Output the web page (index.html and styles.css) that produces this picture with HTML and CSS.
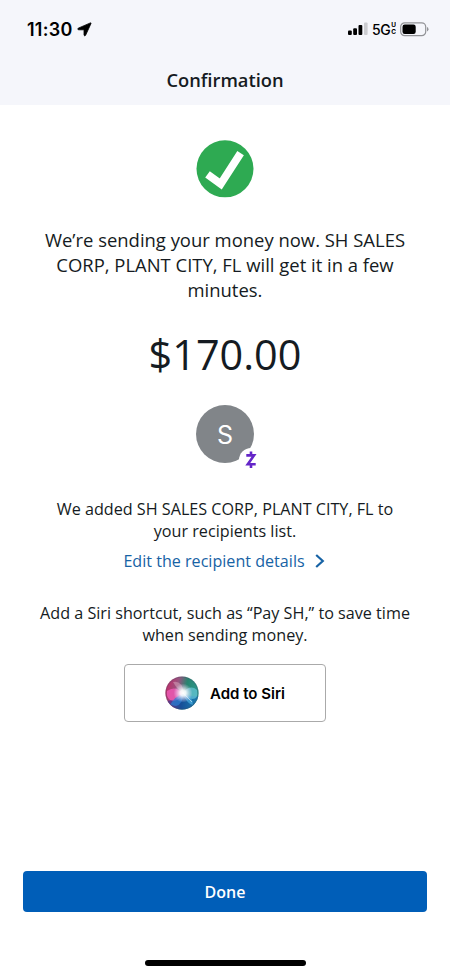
FILE: index.html
```html
<!DOCTYPE html>
<html lang="en">
<head>
<meta charset="utf-8">
<meta name="viewport" content="width=device-width, initial-scale=1">
<title>Confirmation</title>
<link rel="stylesheet" href="styles.css">
</head>
<body>
<div class="screen">
  <header class="header">
    <div class="status">
      <div class="clock">
        <span class="time">11:30</span>
        <svg class="location" width="15" height="15" viewBox="0 0 15 15"><path d="M13.4.9 1.2 6.2Q.2 7 1.3 7.8H6.6Q7 7.8 7 8.2V13.2Q7.7 14.5 8.6 13.3L14 1.5Q14.2.6 13.4.9Z" stroke="#000" stroke-width=".8" stroke-linejoin="round"/></svg>
      </div>
      <div class="indicators">
        <svg width="20" height="14" viewBox="0 0 20 14"><rect x="0" y="8.5" width="3.8" height="4.5" rx="1"/><rect x="5.2" y="6.3" width="3.8" height="6.7" rx="1"/><rect x="10.5" y="3" width="3.8" height="10" rx="1"/><rect x="16" y="0.5" width="3.6" height="12.5" rx="1" fill="#cbccd0"/></svg>
        <span class="network">5G</span>
        <span class="band"><span>U</span><span>C</span></span>
        <svg class="battery" width="29" height="15" viewBox="0 0 29 15"><rect x=".7" y=".8" width="25" height="12.9" rx="4" fill="none" stroke="#929397" stroke-width="1.2"/><rect x="2.5" y="2.6" width="13.2" height="9.3" rx="2.2"/><path d="M27 5Q28.5 5.6 28.5 7.2T27 9.5Z" fill="#929397"/></svg>
      </div>
    </div>
    <h1 class="title">Confirmation</h1>
  </header>
  <main class="content">
    <svg class="success" width="58" height="58" viewBox="0 0 58 58"><circle cx="29" cy="28.8" r="28.5" fill="#2eaa52"/><path d="m11.5 34.4 13.2 9.6L44.6 13.1" fill="none" stroke="#fff" stroke-width="7.8" stroke-linejoin="miter"/></svg>
    <p class="message">We’re sending your money now. SH SALES<br>CORP, PLANT CITY, FL will get it in a few<br>minutes.</p>
    <p class="amount">$170.00</p>
    <div class="avatar">S
      <span class="badge"><svg width="12" height="18" viewBox="0 0 12 18" fill="none" stroke="#6425c8" stroke-width="2.6"><path d="M1.3 4.4H9L2.8 13.2H10.7M6 .6V4M6 13.2V17"/></svg></span>
    </div>
    <p class="note added">We added SH SALES CORP, PLANT CITY, FL to<br>your recipients list.</p>
    <a class="edit" href="#"><span>Edit the recipient details</span><svg width="10" height="14" viewBox="0 0 10 14" fill="none" stroke="#1763a5" stroke-width="2.2"><path d="m1.2 1 6.6 6-6.6 6"/></svg></a>
    <p class="note shortcut">Add a Siri shortcut, such as “Pay SH,” to save time<br>when sending money.</p>
    <button class="siri">
      <svg width="34" height="34" viewBox="0 0 34 34">
        <defs>
          <linearGradient id="base" x1="0" y1=".35" x2="1" y2=".55"><stop offset="0" stop-color="#c52c69"/><stop offset=".35" stop-color="#96547f"/><stop offset=".6" stop-color="#28846f"/><stop offset="1" stop-color="#2a9c91"/></linearGradient>
          <linearGradient id="low" x1="0" y1="0" x2="1" y2="0"><stop offset="0" stop-color="#78308f"/><stop offset=".45" stop-color="#174f98"/><stop offset="1" stop-color="#1a83b2"/></linearGradient>
          <radialGradient id="glow"><stop offset="0" stop-color="#fff"/><stop offset=".3" stop-color="#fff" stop-opacity=".9"/><stop offset="1" stop-color="#e9d9ff" stop-opacity="0"/></radialGradient>
          <clipPath id="orb"><circle cx="17" cy="17" r="16.6"/></clipPath>
        </defs>
        <g clip-path="url(#orb)">
          <path d="M0 0H34V34H0Z" fill="url(#base)"/>
          <path d="M1 25Q9 25 18 17Q24 21 34 20V34H1Z" fill="url(#low)"/>
          <path d="M2 15Q10 9 18 17Q13 27 5 24Q1 21 2 15Z" fill="#ec58b3" opacity=".85"/>
          <path d="M18 17Q25 8 32 14Q34 23 27 23Q22 22 18 17Z" fill="#68c7da" opacity=".7"/>
          <path d="M5 29Q10 20 18 18Q18 28 11 30Z" fill="#287fd3" opacity=".7"/>
          <path d="M18 18Q28 20 28 29Q22 28 18 18Z" fill="#51b9e9" opacity=".6"/>
          <path d="M8 6Q17 4 19 17Q13 15 8 6Z" fill="#dbabc0" opacity=".5"/>
          <circle cx="18" cy="17" r="9.5" fill="url(#glow)"/>
          <path d="m18 17 9 9" fill="none" stroke="#fff" stroke-width=".8" opacity=".65"/>
        </g>
        <circle cx="17" cy="17" r="16" fill="none" stroke="#424d68" stroke-opacity=".3" stroke-width="1.2"/>
      </svg>
      <span>Add to Siri</span>
    </button>
  </main>
  <footer class="footer">
    <button class="done">Done</button>
    <div class="home"></div>
  </footer>
</div>
</body>
</html>
```
FILE: styles.css
```css
* { box-sizing: border-box; }
body { margin: 0; background: #fff; color: #151b22; font-family: "Open Sans", sans-serif; }
h1, p { margin: 0; }
button { font: inherit; }
svg { display: block; flex: none; }
.screen { height: 975px; display: flex; flex-direction: column; overflow: hidden; }
.header { height: 105px; background: #f5f6fb; }
.status { height: 58px; padding: 0 21px 0 27px; display: flex; justify-content: space-between; align-items: center; color: #000; font-family: Inter, sans-serif; }
.clock { display: flex; align-items: center; gap: 4px; }
.time { font-size: 18px; font-weight: 600; letter-spacing: 0.25px; }
.indicators { display: flex; align-items: center; }
.network { margin-left: 4px; font-size: 14px; font-weight: 500; letter-spacing: -0.5px; }
.band { display: flex; flex-direction: column; margin-left: 1px; font-size: 6.5px; line-height: 7px; font-weight: 700; }
.band span { height: 7px; overflow: hidden; }
.battery { margin-left: 4px; }
.title { font-size: 18.3px; line-height: 26px; margin-top: 9px; font-weight: 600; text-align: center; }
.content { flex: 1; padding-top: 35px; display: flex; flex-direction: column; align-items: center; text-align: center; }
.message { margin-top: 29px; font-size: 18.45px; line-height: 25px; white-space: nowrap; }
.amount { margin-top: 24px; font-size: 41.4px; line-height: 56px; }
.avatar { position: relative; width: 58px; height: 58px; margin-top: 23px; border-radius: 50%; background: #818589; color: #fff; font: 25px/60px Inter, sans-serif; }
.badge { position: absolute; left: 43px; top: 43px; width: 24px; height: 24px; border-radius: 50%; background: #fff; display: grid; place-items: center; }
.note { font-size: 16.17px; line-height: 22px; white-space: nowrap; }
.added { margin-top: 35px; }
.edit { margin-top: 8px; margin-right: 2px; display: flex; align-items: center; gap: 10px; color: #1763a5; text-decoration: none; font-size: 16.12px; line-height: 22px; }
.shortcut { margin-top: 30px; }
.siri { width: 202px; height: 58px; margin-top: 18px; padding: 0; border: 1px solid #aaa; border-radius: 4px; background: #fff; color: #000; display: flex; align-items: center; justify-content: center; gap: 11px; font: 600 15px Inter, sans-serif; }
.footer { height: 104px; padding: 0 23px; display: flex; flex-direction: column; align-items: center; }
.done { width: 100%; height: 41px; padding: 0; border: 0; border-radius: 4px; background: #005eb8; color: #fff; font-size: 16px; font-weight: 600; }
.home { width: 161px; height: 6px; margin-top: 48px; border-radius: 3px; background: #000; }
```
